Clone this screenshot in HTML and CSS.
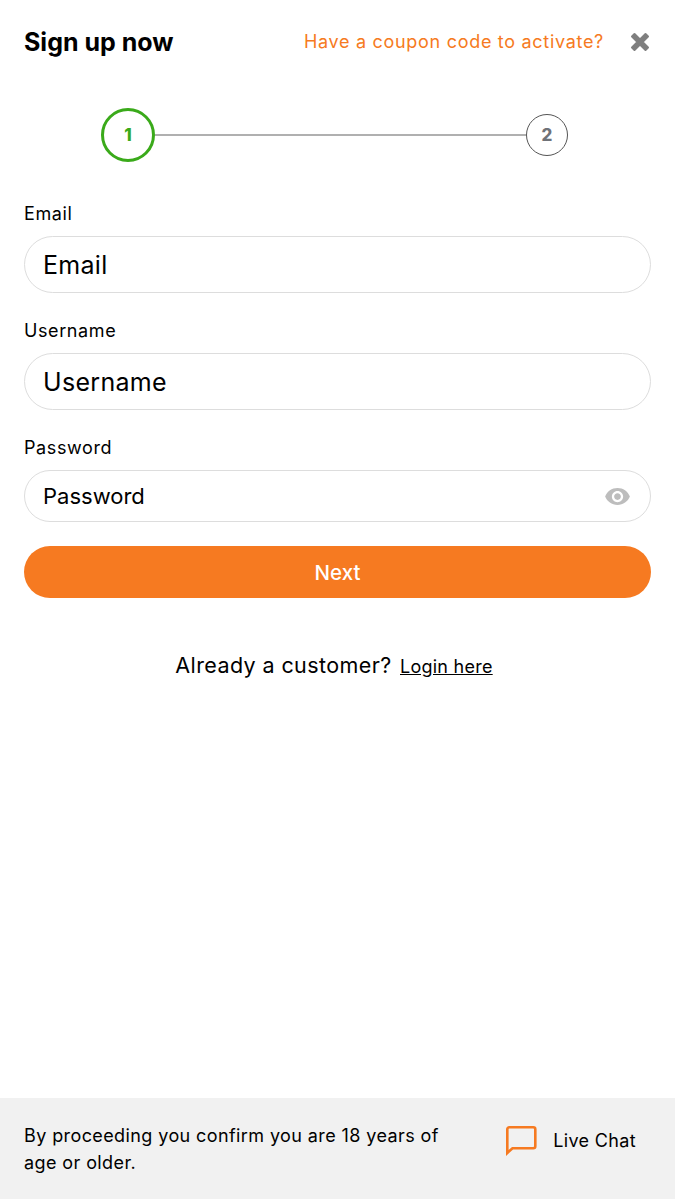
FILE: index.html
```html
<!DOCTYPE html>
<html lang="en">
<head>
  <meta charset="UTF-8">
  <meta name="viewport" content="width=device-width, initial-scale=1.0">
  <title>Sign up now</title>
  <link rel="stylesheet" href="styles.css">
</head>
<body>
  <div class="page">
    <div class="content">
      <div class="header">
        <h1>Sign up now</h1>
        <a class="coupon">Have a coupon code to activate?</a>
        <svg class="close" width="20" height="20" viewBox="0 0 20 20">
          <path d="M4.5 2 10 7.500 15.500 2 18 4.500 12.500 10l5.500 5.500-2.500 2.500L10 12.500 4.500 18 2 15.500 7.500 10 2 4.500z" fill="#7f7f7f" stroke="#7f7f7f" stroke-width="2" stroke-linejoin="round"/>
        </svg>
      </div>

      <div class="steps">
        <div class="step active">1</div>
        <div class="step-line"></div>
        <div class="step">2</div>
      </div>

      <form class="form">
        <label class="field-label">Email</label>
        <div class="input">Email</div>
        <label class="field-label">Username</label>
        <div class="input">Username</div>
        <label class="field-label">Password</label>
        <div class="input input-password">
          <span>Password</span>
          <svg class="eye" width="27" height="27" viewBox="0 0 24 24">
            <path d="M12 4.500C7 4.500 2.730 7.610 1 12c1.730 4.390 6 7.500 11 7.500s9.270-3.110 11-7.500c-1.730-4.390-6-7.500-11-7.500zM12 17c-2.760 0-5-2.240-5-5s2.240-5 5-5 5 2.240 5 5-2.240 5-5 5zm0-8c-1.660 0-3 1.340-3 3s1.340 3 3 3 3-1.340 3-3-1.340-3-3-3z" fill="#bdbdbd"/>
          </svg>
        </div>
        <button class="next" type="button">Next</button>
      </form>

      <p class="login">Already a customer? <a>Login here</a></p>
    </div>

    <div class="footer">
      <p class="terms">By proceeding you confirm you are 18 years of age or older.</p>
      <div class="chat">
        <svg width="31" height="30" viewBox="0 0 31 30">
          <path d="M1.300 27V3.300a2 2 0 0 1 2-2h24a2 2 0 0 1 2 2v17a2 2 0 0 1-2 2H6.500z" fill="none" stroke="#f67a21" stroke-width="2.600"/>
        </svg>
        <span>Live Chat</span>
      </div>
    </div>
  </div>
</body>
</html>
```

FILE: styles.css
```css
* {
  box-sizing: border-box;
}
html, body {
  margin: 0;
  height: 100%;
}
body {
  font-family: Inter, "Open Sans", sans-serif;
  color: #000;
  background: #fff;
}
.page {
  display: flex;
  flex-direction: column;
  height: 1199px;
}
.content {
  flex: 1;
  padding: 0 24px;
}
.header {
  display: flex;
  align-items: center;
  height: 83px;
}
h1 {
  margin: 0 auto 0 0;
  font-size: 25px;
  font-weight: 700;
}
.coupon {
  font-size: 18px;
  font-weight: 400;
  letter-spacing: 0.7px;
  color: #f67a21;
}
.close {
  margin-left: 26px;
  margin-right: 1px;
}
.steps {
  display: flex;
  align-items: center;
  padding: 0 83px 0 77px;
  height: 54px;
  margin-top: 25px;
}
.step {
  flex: none;
  display: flex;
  align-items: center;
  justify-content: center;
  width: 42px;
  height: 42px;
  border: 1px solid #555;
  border-radius: 50%;
  font-size: 17px;
  font-weight: 800;
  color: #6f7278;
}
.step.active {
  width: 54px;
  height: 54px;
  border: 3px solid #3aaa1a;
  color: #3aaa1a;
}
.step-line {
  flex: 1;
  height: 2px;
  background: #b0b0b0;
}
.form {
  display: flex;
  flex-direction: column;
  margin-top: 38px;
}
.field-label {
  font-size: 18px;
  letter-spacing: 0.6px;
  line-height: 27px;
  margin-bottom: 9px;
}
.input {
  display: flex;
  align-items: center;
  height: 57px;
  padding: 0 18px;
  margin-bottom: 24px;
  border: 1px solid #ddd;
  border-radius: 29px;
  font-size: 25px;
  letter-spacing: 0.3px;
}
.input-password {
  justify-content: space-between;
  height: 52px;
  padding-right: 19px;
  font-size: 22px;
  letter-spacing: 0;
}
.next {
  height: 52px;
  border: none;
  border-radius: 26px;
  background: #f67a21;
  color: #fff;
  font: 500 20.500px Inter, "Open Sans", sans-serif;
}
.login {
  margin: 55px 0 0;
  padding-right: 7px;
  text-align: center;
  font-size: 21.500px;
  letter-spacing: 0.4px;
  line-height: 24px;
}
.login a {
  margin-left: 2px;
  font-size: 18px;
  letter-spacing: 0.25px;
  text-decoration: underline;
}
.footer {
  display: flex;
  align-items: center;
  justify-content: space-between;
  height: 101px;
  padding: 0 39px 0 24px;
  background: #f1f1f1;
}
.terms {
  margin: 0;
  width: 430px;
  font-size: 18px;
  letter-spacing: 0.4px;
  line-height: 27px;
}
.chat {
  display: flex;
  align-items: center;
  gap: 16px;
  margin-bottom: 16px;
  font-size: 18px;
  letter-spacing: 0.35px;
}
```
